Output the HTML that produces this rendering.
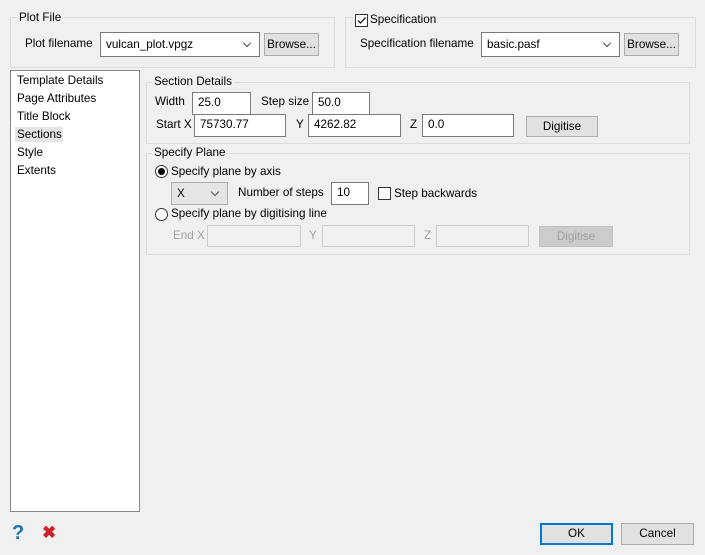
<!DOCTYPE html>
<html><head><meta charset="utf-8"><style>
*{box-sizing:border-box;margin:0;padding:0}
body{width:705px;height:555px;background:#f0f0f0;font-family:"Liberation Sans",sans-serif;font-size:11.7px;color:#000;position:relative;overflow:hidden}
.a{position:absolute}
.g{position:absolute;border:1px solid #dcdcdc}
.gl{position:absolute;background:#f0f0f0;padding:0 2px;line-height:14px}
.t{position:absolute;line-height:14px;white-space:nowrap}
.in{position:absolute;background:#fff;border:1px solid #7a7a7a;padding-left:5px;line-height:20px}
.dis{background:#f0f0f0;border-color:#ccc}
.btn{position:absolute;background:#e1e1e1;border:1px solid #adadad;text-align:center}
.chev{position:absolute;width:6px;height:6px;border-right:1px solid #555;border-bottom:1px solid #555;transform:rotate(45deg)}
.gray{color:#a0a0a0}
</style></head><body>
<div class="g" style="left:10px;top:17px;width:325px;height:51px"></div>
<div class="gl" style="left:17px;top:11px">Plot File</div>
<div class="t" style="left:25px;top:37px">Plot filename</div>
<div class="in" style="left:100px;top:32px;width:160px;height:25px;line-height:23px">vulcan_plot.vpgz</div>
<div class="chev" style="left:244px;top:40px"></div>
<div class="btn" style="left:264px;top:33px;width:55px;height:23px;line-height:21px">Browse...</div>

<div class="g" style="left:345px;top:17px;width:351px;height:51px"></div>
<div class="a" style="left:352px;top:11px;width:84px;height:14px;background:#f0f0f0"></div>
<div class="a" style="left:355px;top:14px;width:13px;height:13px;border:1px solid #333;background:#fff"></div>
<svg class="a" style="left:355px;top:14px" width="13" height="13"><path d="M3 6.5l2.5 2.5 5-5.5" stroke="#000" stroke-width="1.2" fill="none"/></svg>
<div class="t" style="left:370px;top:13px">Specification</div>
<div class="t" style="left:360px;top:37px">Specification filename</div>
<div class="in" style="left:481px;top:32px;width:139px;height:25px;line-height:23px">basic.pasf</div>
<div class="chev" style="left:604px;top:40px"></div>
<div class="btn" style="left:624px;top:33px;width:55px;height:23px;line-height:21px">Browse...</div>

<div class="a" style="left:10px;top:70px;width:130px;height:442px;background:#fff;border:1px solid #828790"></div>
<div class="a" style="left:15px;top:127px;width:48px;height:15px;background:#e5e5e5"></div>
<div class="t" style="left:17px;top:74px">Template Details</div>
<div class="t" style="left:17px;top:92px">Page Attributes</div>
<div class="t" style="left:17px;top:110px">Title Block</div>
<div class="t" style="left:17px;top:128px">Sections</div>
<div class="t" style="left:17px;top:146px">Style</div>
<div class="t" style="left:17px;top:164px">Extents</div>

<div class="g" style="left:146px;top:82px;width:544px;height:62px"></div>
<div class="gl" style="left:152px;top:75px">Section Details</div>
<div class="t" style="left:155px;top:95px">Width</div>
<div class="in" style="left:192px;top:92px;width:59px;height:23px">25.0</div>
<div class="t" style="left:261px;top:95px">Step size</div>
<div class="in" style="left:312px;top:92px;width:58px;height:23px">50.0</div>
<div class="t" style="left:156px;top:118px">Start X</div>
<div class="in" style="left:194px;top:114px;width:92px;height:23px">75730.77</div>
<div class="t" style="left:296px;top:118px">Y</div>
<div class="in" style="left:308px;top:114px;width:93px;height:23px">4262.82</div>
<div class="t" style="left:410px;top:118px">Z</div>
<div class="in" style="left:422px;top:114px;width:92px;height:23px">0.0</div>
<div class="btn" style="left:526px;top:116px;width:72px;height:21px;line-height:19px">Digitise</div>

<div class="g" style="left:146px;top:153px;width:544px;height:102px"></div>
<div class="gl" style="left:152px;top:146px">Specify Plane</div>
<div class="a" style="left:155px;top:165px;width:13px;height:13px;border:1px solid #333;border-radius:50%;background:#fff"></div>
<div class="a" style="left:158px;top:168px;width:7px;height:7px;border-radius:50%;background:#000"></div>
<div class="t" style="left:171px;top:165px">Specify plane by axis</div>
<div class="a" style="left:171px;top:182px;width:57px;height:23px;background:#e5e5e5;border:1px solid #acacac"></div>
<div class="t" style="left:177px;top:187px">X</div>
<div class="chev" style="left:212px;top:189px"></div>
<div class="t" style="left:238px;top:186px">Number of steps</div>
<div class="in" style="left:331px;top:182px;width:38px;height:23px">10</div>
<div class="a" style="left:378px;top:187px;width:13px;height:13px;border:1px solid #333;background:#fff"></div>
<div class="t" style="left:394px;top:187px">Step backwards</div>
<div class="a" style="left:155px;top:208px;width:13px;height:13px;border:1px solid #333;border-radius:50%;background:#fff"></div>
<div class="t" style="left:171px;top:207px">Specify plane by digitising line</div>
<div class="t gray" style="left:173px;top:229px">End X</div>
<div class="in dis" style="left:207px;top:225px;width:94px;height:22px"></div>
<div class="t gray" style="left:309px;top:229px">Y</div>
<div class="in dis" style="left:322px;top:225px;width:93px;height:22px"></div>
<div class="t gray" style="left:424px;top:229px">Z</div>
<div class="in dis" style="left:436px;top:225px;width:93px;height:22px"></div>
<div class="btn" style="left:539px;top:226px;width:74px;height:21px;line-height:19px;background:#ccc;border-color:#bfbfbf;color:#a0a0a0">Digitise</div>

<div class="t" style="left:12px;top:522px;font-size:20px;line-height:22px;font-weight:bold;color:#1a73b5">?</div>
<div class="t" style="left:42px;top:524px;font-size:17px;line-height:18px;font-weight:bold;color:#c8262c">✖</div>
<div class="btn" style="left:540px;top:523px;width:73px;height:22px;line-height:18px;border:2px solid #0078d7">OK</div>
<div class="btn" style="left:621px;top:523px;width:73px;height:22px;line-height:20px">Cancel</div>
</body></html>
